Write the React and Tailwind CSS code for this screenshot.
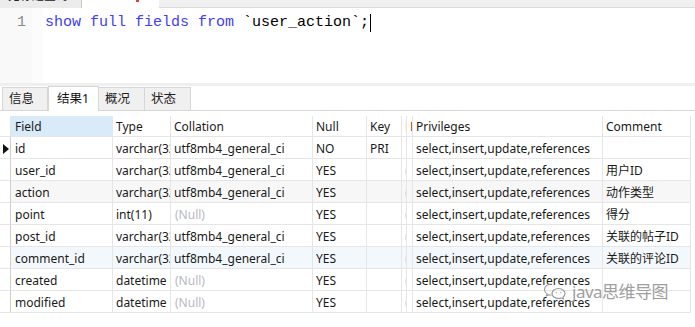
import React from 'react';

const cols = [
  { key: 'ind', w: 11 },
  { key: 'field', w: 102, label: 'Field' },
  { key: 'type', w: 58, label: 'Type' },
  { key: 'coll', w: 142, label: 'Collation' },
  { key: 'null', w: 54, label: 'Null' },
  { key: 'key', w: 35, label: 'Key' },
  { key: 'def', w: 5, label: 'D' },
  { key: 'extra', w: 6, label: 'E' },
  { key: 'priv', w: 190, label: 'Privileges' },
  { key: 'comment', w: 88, label: 'Comment' },
];

const PRIV = 'select,insert,update,references';

const rows = [
  { field: 'id', type: 'varchar(32)', coll: 'utf8mb4_general_ci', null: 'NO', key: 'PRI', def: '', comment: '', bg: 'bg-white', active: true },
  { field: 'user_id', type: 'varchar(32)', coll: 'utf8mb4_general_ci', null: 'YES', key: '', def: '(', comment: '用户ID', bg: 'bg-white' },
  { field: 'action', type: 'varchar(32)', coll: 'utf8mb4_general_ci', null: 'YES', key: '', def: '(', comment: '动作类型', bg: 'bg-[#f7f7f7]' },
  { field: 'point', type: 'int(11)', coll: null, null: 'YES', key: '', def: '(', comment: '得分', bg: 'bg-white' },
  { field: 'post_id', type: 'varchar(32)', coll: 'utf8mb4_general_ci', null: 'YES', key: '', def: '(', comment: '关联的帖子ID', bg: 'bg-white' },
  { field: 'comment_id', type: 'varchar(32)', coll: 'utf8mb4_general_ci', null: 'YES', key: '', def: '(', comment: '关联的评论ID', bg: 'bg-[#f3f8fd]' },
  { field: 'created', type: 'datetime', coll: null, null: 'YES', key: '', def: '(', comment: '', bg: 'bg-white' },
  { field: 'modified', type: 'datetime', coll: null, null: 'YES', key: '', def: '(', comment: '', bg: 'bg-white' },
];

const gridCols = 'grid grid-cols-[11px_102px_58px_142px_54px_35px_5px_6px_190px_88px]';

const Cell = ({ children, className = '' }) => (
  <div className={`overflow-hidden whitespace-nowrap border-r border-b border-[#e6e6e6] pl-[3px] pt-[2px] flex items-center ${className}`}>
    {children}
  </div>
);

const Tab = ({ label, active, w }) => (
  <div
    className={
      active
        ? `${w} h-[25px] bg-white border border-b-0 border-[#d6d6d6] pl-[8px] flex items-center text-[12.5px] text-[#111] -mb-px`
        : `${w} h-[23px] bg-[#f0f0f0] border border-b-0 border-l-0 border-[#d6d6d6] pl-[6px] flex items-center text-[12.5px] text-[#222]`
    }
  >
    {label}
  </div>
);

const Watermark = () => (
  <div className="absolute left-[543px] top-[282px] flex items-center gap-[5px] pointer-events-none">
    <svg width="24" height="18" viewBox="0 0 24 18" fill="none" stroke="#9a9a9a" strokeWidth="1.1">
      <path d="M8.5 2C4.6 2 1.5 4.5 1.5 7.6c0 1.8 1 3.3 2.6 4.3l-.6 2 2.3-1.2c.8.2 1.7.4 2.7.4" />
      <path d="M15.5 6.5c3.6 0 6.5 2.3 6.5 5.1 0 1.5-.8 2.8-2.1 3.7l.5 1.7-2-1c-.9.3-1.9.5-2.9.5-3.6 0-6.5-2.3-6.5-5 0-2.8 2.9-5 6.5-5z" />
      <circle cx="13.2" cy="10.6" r=".7" fill="#9a9a9a" stroke="none" />
      <circle cx="17.8" cy="10.6" r=".7" fill="#9a9a9a" stroke="none" />
    </svg>
    <span className="text-[17px] leading-none text-[#a0a0a0] tracking-[-0.5px]">java思维导图</span>
  </div>
);

export default function App() {
  return (
    <div className="relative w-[695px] h-[327px] overflow-hidden bg-white [font-family:'Noto_Sans','Noto_Sans_CJK_SC',sans-serif]">
      {/* query editor tab strip, cut off at the top */}
      <div className="flex h-[8px] bg-[#f0f0f0] border-b border-[#dcdcdc]">
        <div className="w-[82px] h-[8px] overflow-hidden border-r border-[#c8c8c8] bg-[#ececec]">
          <div className="text-[12px] leading-[12px] -mt-[10px] pl-[8px] text-[#222]">无标题查询</div>
        </div>
        <div className="w-[77px] h-[9px] bg-white relative">
          <div className="absolute left-[54px] top-0 w-[3px] h-[2px] bg-[#e04040]" />
        </div>
        <div className="flex-1" />
      </div>

      {/* editor */}
      <div className="flex h-[75px]">
        <div className="w-[32px] bg-[#f9f9f9] pt-[6px] text-right pr-[6px] text-[15px] leading-[18px] text-[#8a8a8a] [font-family:'Liberation_Mono',monospace]">
          1
        </div>
        <div className="w-[11px] bg-[#fcfcfc]" />
        <div className="pt-[6px] pl-[2px] text-[15px] leading-[18px] [font-family:'Liberation_Mono',monospace] whitespace-pre flex items-start">
          <span className="text-[#3e3ef6]">show full fields from </span>
          <span className="text-black">`user_action`;</span>
          <span className="inline-block w-px h-[18px] bg-black ml-[1px]" />
        </div>
      </div>

      {/* splitter */}
      <div className="h-[3px] bg-[#efefef]" />

      {/* result tabs */}
      <div className="h-[25px] flex items-end pl-[2px] border-b border-[#d6d6d6]">
        <div className="w-[46px] h-[23px] bg-[#f0f0f0] border border-b-0 border-[#d6d6d6] pl-[6px] flex items-center text-[12.5px] text-[#222]">
          信息
        </div>
        <Tab label="结果1" active w="w-[51px]" />
        <Tab label="概况" w="w-[46px]" />
        <Tab label="状态" w="w-[46px]" />
      </div>

      <div className="h-[5px]" />

      {/* grid */}
      <div className="w-[691px] text-[12px] text-[#1a1a1a]">
        <div className={`${gridCols} h-[21px]`}>
          {cols.map((c) => (
            <Cell
              key={c.key}
              className={
                c.key === 'field'
                  ? 'bg-[#d9eaf8] pl-[4px]'
                  : c.key === 'def' || c.key === 'extra'
                  ? 'pl-[1px] text-[#8b4a1a]'
                  : c.key === 'ind'
                  ? 'border-[#d0d0d0]'
                  : 'pl-[3px]'
              }
            >
              {c.label}
            </Cell>
          ))}
        </div>

        {rows.map((r) => (
          <div key={r.field} className={`${gridCols} h-[22px] ${r.bg}`}>
            <Cell className="pl-[3px] pt-0 border-r-[#cfcfcf] bg-white">
              {r.active && (
                <svg width="6" height="10" viewBox="0 0 6 10">
                  <path d="M0 0 L6 5 L0 10 Z" fill="#111" />
                </svg>
              )}
            </Cell>
            <Cell className="pl-[4px]">{r.field}</Cell>
            <Cell className="pl-[2px]">{r.type}</Cell>
            <Cell className="pl-[2px]">
              {r.coll ? r.coll : <span className="text-[#b8b8c4] pl-[1px]">(Null)</span>}
            </Cell>
            <Cell className="pl-[3px]">{r.null}</Cell>
            <Cell className="pl-[3px]">{r.key}</Cell>
            <Cell className="pl-[1px] text-[#c0c8d4]">{r.def}</Cell>
            <Cell />
            <Cell className="pl-[3px]">{PRIV}</Cell>
            <Cell className="pl-[2px]">{r.comment}</Cell>
          </div>
        ))}
      </div>

      <Watermark />
    </div>
  );
}
